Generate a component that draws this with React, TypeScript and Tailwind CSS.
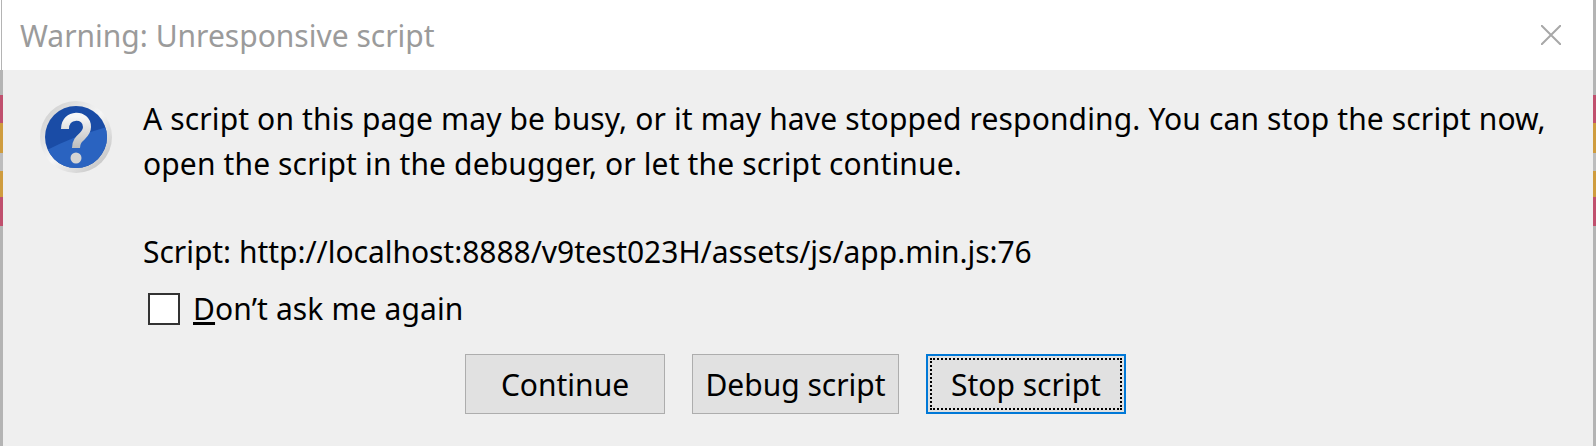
import React from 'react';

const fontClass = "font-['Noto_Sans',sans-serif]";

// Slice of the page that shows past the dialog's left edge
const stripe = [
    { h: 'h-[25px]', c: 'bg-[#b4b4b4]' },
    { h: 'h-[28px]', c: 'bg-[#c0506e]' },
    { h: 'h-[30px]', c: 'bg-[#cf9c3e]' },
    { h: 'h-[18px]', c: 'bg-[#bdbdbd]' },
    { h: 'h-[26px]', c: 'bg-[#cf9c3e]' },
    { h: 'h-[29px]', c: 'bg-[#c0506e]' },
    { h: 'flex-1', c: 'bg-[#b4b4b4]' },
];

const HelpIcon: React.FC = () => (
    <svg width="76" height="76" viewBox="0 0 76 76" className="shrink-0">
        <defs>
            <linearGradient id="ring" x1="0" y1="0" x2="1" y2="1">
                <stop offset="0" stopColor="#c8c8c8" />
                <stop offset="0.5" stopColor="#f6f6f6" />
                <stop offset="1" stopColor="#b8b8b8" />
            </linearGradient>
            <linearGradient id="mark" x1="0" y1="0" x2="0" y2="1">
                <stop offset="0" stopColor="#f7f7f7" />
                <stop offset="1" stopColor="#bdbdbd" />
            </linearGradient>
            <clipPath id="disc">
                <circle cx="38" cy="38" r="31" />
            </clipPath>
        </defs>
        <circle cx="38" cy="38" r="36" fill="url(#ring)" />
        <circle cx="38" cy="38" r="31" fill="#1a4ca6" />
        <path d="M0 56 Q30 38 76 26 V76 H0 Z" fill="#2a63c0" clipPath="url(#disc)" />
        <path d="M27 30 C27 14 49 14 49 28 C49 38 38 37 38 49" fill="none" stroke="url(#mark)" strokeWidth="8" />
        <circle cx="38" cy="59" r="5.5" fill="#d4d4d4" />
    </svg>
);

const DialogButton: React.FC<{ label: string; width: string; focused?: boolean }> = ({ label, width, focused }) => (
    <button
        className={
            focused
                ? `${width} h-[60px] bg-[#e1e1e1] text-[30px] text-black border-2 border-[#0078d7] outline-2 outline-dotted outline-black -outline-offset-[6px]`
                : `${width} h-[60px] bg-[#e1e1e1] text-[30px] text-black border border-[#adadad]`
        }
    >
        {label}
    </button>
);

export default function App() {
    return (
        <div className={`${fontClass} w-[1596px] h-[446px] flex overflow-hidden bg-white`}>
            <div className="w-[3px] flex flex-col">
                <div className="h-[70px] bg-white border-l border-white">
                    <div className="w-px h-full bg-[#b4b4b4]" />
                </div>
                {stripe.map((s, i) => (
                    <div key={i} className={`${s.h} ${s.c}`} />
                ))}
            </div>
            <div className="flex-1 flex flex-col">
                <div className="h-[70px] flex items-center justify-between pl-[17px] pr-[32px] bg-white">
                    <span className="text-[30px] text-[#9b9b9b]">Warning: Unresponsive script</span>
                    <svg width="20" height="20" viewBox="0 0 20 20">
                        <path d="M0 0 L20 20 M20 0 L0 20" stroke="#a8a8a8" strokeWidth="2" />
                    </svg>
                </div>
                <div className="flex-1 flex bg-[#efefef] pl-[35px] pt-[29px]">
                    <HelpIcon />
                    <div className="pl-[29px] flex-1 flex flex-col -mt-[3px]">
                        <p className="text-[30px] leading-[45px] tracking-[0.13px] text-black">
                            A script on this page may be busy, or it may have stopped responding. You can stop the script now,
                            <br />
                            open the script in the debugger, or let the script continue.
                        </p>
                        <p className="mt-[43px] text-[30px] leading-[45px] tracking-[-0.03px] text-black">
                            Script: http://localhost:8888/v9test023H/assets/js/app.min.js:76
                        </p>
                        <label className="mt-[15px] flex items-center gap-[13px] text-[30px] leading-[40px] tracking-[0.12px] text-black">
                            <span className="ml-[5px] w-[32px] h-[32px] bg-white border-2 border-[#333333]" />
                            <span>
                                <span className="underline">D</span>on’t ask me again
                            </span>
                        </label>
                        <div className="mt-[25px] ml-[322px] flex gap-[27px]">
                            <DialogButton label="Continue" width="w-[200px]" />
                            <DialogButton label="Debug script" width="w-[207px]" />
                            <DialogButton label="Stop script" width="w-[200px]" focused />
                        </div>
                    </div>
                </div>
            </div>
            <div className="w-[3px] flex flex-col">
                <div className="h-[70px] bg-[#b4b4b4]" />
                {stripe.map((s, i) => (
                    <div key={i} className={`${s.h} ${s.c}`} />
                ))}
            </div>
        </div>
    );
}
